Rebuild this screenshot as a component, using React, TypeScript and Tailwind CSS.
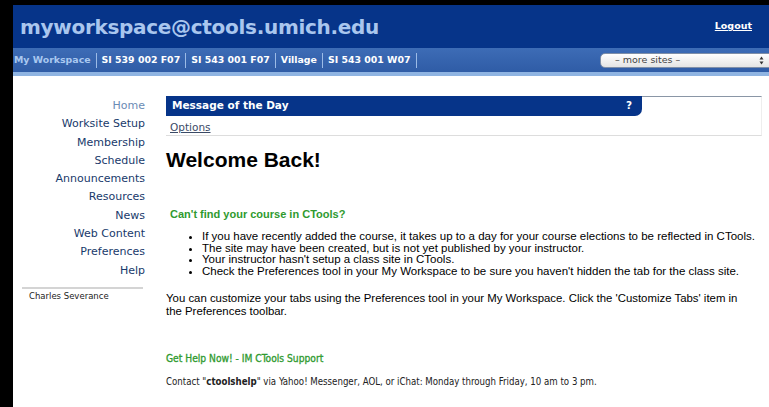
import React from "react";

const tabs = ["SI 539 002 F07", "SI 543 001 F07", "Village", "SI 543 001 W07"];

const navItems = [
  "Worksite Setup",
  "Membership",
  "Schedule",
  "Announcements",
  "Resources",
  "News",
  "Web Content",
  "Preferences",
  "Help",
];

const bullets = [
  "If you have recently added the course, it takes up to a day for your course elections to be reflected in CTools.",
  "The site may have been created, but is not yet published by your instructor.",
  "Your instructor hasn't setup a class site in CTools.",
  "Check the Preferences tool in your My Workspace to be sure you haven't hidden the tab for the class site.",
];

const verdana = '"DejaVu Sans", Verdana, sans-serif';
const tahoma = '"DejaVu Sans Condensed", "DejaVu Sans", Tahoma, sans-serif';

export default function App() {
  return (
    <div className="w-[769px] h-[407px] overflow-hidden bg-black pl-[13px] pt-[5px]">
      <div className="flex h-full flex-col bg-white">
        {/* Site header */}
        <div className="flex h-[43px] shrink-0 items-center justify-between bg-[#063489] pl-[7px] pr-[17px]">
          <div
            className="text-[20px] font-bold leading-none text-[#a9c6ee] tracking-[-0.3px]"
            style={{ fontFamily: verdana }}
          >
            myworkspace@ctools.umich.edu
          </div>
          <a className="text-[9.5px] font-bold text-white underline" style={{ fontFamily: verdana }}>
            Logout
          </a>
        </div>

        {/* Site tabs */}
        <div
          className="flex h-[24px] shrink-0 items-center bg-gradient-to-b from-[#3d6cb6] to-[#2f5ca6] text-[9.4px] font-bold"
          style={{ fontFamily: verdana }}
        >
          <span className="pl-[1px] text-[#a9c8f0]">My Workspace</span>
          {tabs.map((t) => (
            <React.Fragment key={t}>
              <span className="mx-[5px] h-[15px] w-px bg-[#9cbbe6]" />
              <span className="text-white">{t}</span>
            </React.Fragment>
          ))}
          <span className="ml-[5px] h-[15px] w-px bg-[#9cbbe6]" />
          <div className="ml-auto -mr-[6px] flex h-[15px] w-[175px] items-center justify-between rounded-[5px] border border-[#7f8fa8] bg-gradient-to-b from-white to-[#e4e4e4] pl-[14px] pr-[10px] text-[9.5px] font-normal text-[#444]">
            <span>– more sites –</span>
            <svg width="5" height="9" viewBox="0 0 5 9" className="shrink-0">
              <path d="M2.5 0.5 L4.5 3.5 L0.5 3.5 Z" fill="#333" />
              <path d="M2.5 8.5 L4.5 5.5 L0.5 5.5 Z" fill="#333" />
            </svg>
          </div>
        </div>
        <div className="h-[4px] shrink-0 bg-[#8fb4e2]" />

        {/* Body */}
        <div className="flex flex-1">
          {/* Tool menu */}
          <div className="w-[132px] shrink-0 pt-[21px] text-[11px]" style={{ fontFamily: verdana }}>
            <ul className="text-right leading-[18.3px]">
              <li className="text-[#6b8bb5]">Home</li>
              {navItems.map((n) => (
                <li key={n} className="text-[#183a6b]">
                  {n}
                </li>
              ))}
            </ul>
            <div className="ml-[9px] mr-[2px] mt-[7px] h-[2px] bg-[#d4d4d4]" />
            <div className="ml-[16px] mt-[1px] text-[8.5px] text-[#222]">Charles Severance</div>
          </div>

          {/* Tool content */}
          <div className="ml-[21px] w-[596px] shrink-0 pt-[20px]">
            <div className="flex">
              <div
                className="flex h-[20px] w-[476px] items-center justify-between rounded-br-[7px] bg-[#063489] pl-[6px] pr-[10px] text-[10.5px] font-bold text-white"
                style={{ fontFamily: verdana }}
              >
                <span>Message of the Day</span>
                <span>?</span>
              </div>
              <div className="flex-1 border-t border-r border-t-[#8a96a6] border-r-[#eeeeee]" />
            </div>
            <div
              className="flex h-[20px] items-end border-b border-r border-b-[#dddddd] border-r-[#eeeeee] pl-[4px] text-[10.5px] leading-[15px] text-[#3b4a66]"
              style={{ fontFamily: verdana }}
            >
              <span className="underline">Options</span>
            </div>

            <div style={{ fontFamily: '"Liberation Sans", Arial, sans-serif' }}>
              <h1 className="mt-[12px] text-[21px] font-bold leading-[24px] text-black">Welcome Back!</h1>
              <h2 className="mt-[35px] pl-[4px] text-[11px] font-bold leading-[14px] text-[#2f9a2f]">
                Can't find your course in CTools?
              </h2>
              <ul className="mt-[10px] list-disc pl-[36px] text-[11.5px] leading-[11.7px] text-black">
                {bullets.map((b) => (
                  <li key={b}>{b}</li>
                ))}
              </ul>
              <p className="mt-[14px] pr-[20px] text-[11.4px] leading-[13px] text-black">
                You can customize your tabs using the Preferences tool in your My Workspace. Click the 'Customize Tabs' item in
                the Preferences toolbar.
              </p>
            </div>

            <div style={{ fontFamily: tahoma, fontStretch: "condensed" }}>
              <h3 className="mt-[34px] text-[10.2px] font-normal leading-[14px] text-[#2f9a2f] [-webkit-text-stroke:0.3px_#2f9a2f]">
                Get Help Now! - IM CTools Support
              </h3>
              <p className="mt-[9px] text-[9.6px] leading-[14px] text-[#222]">
                Contact "<b>ctoolshelp</b>" via Yahoo! Messenger, AOL, or iChat: Monday through Friday, 10 am to 3 pm.
              </p>
            </div>
          </div>
        </div>
      </div>
    </div>
  );
}
